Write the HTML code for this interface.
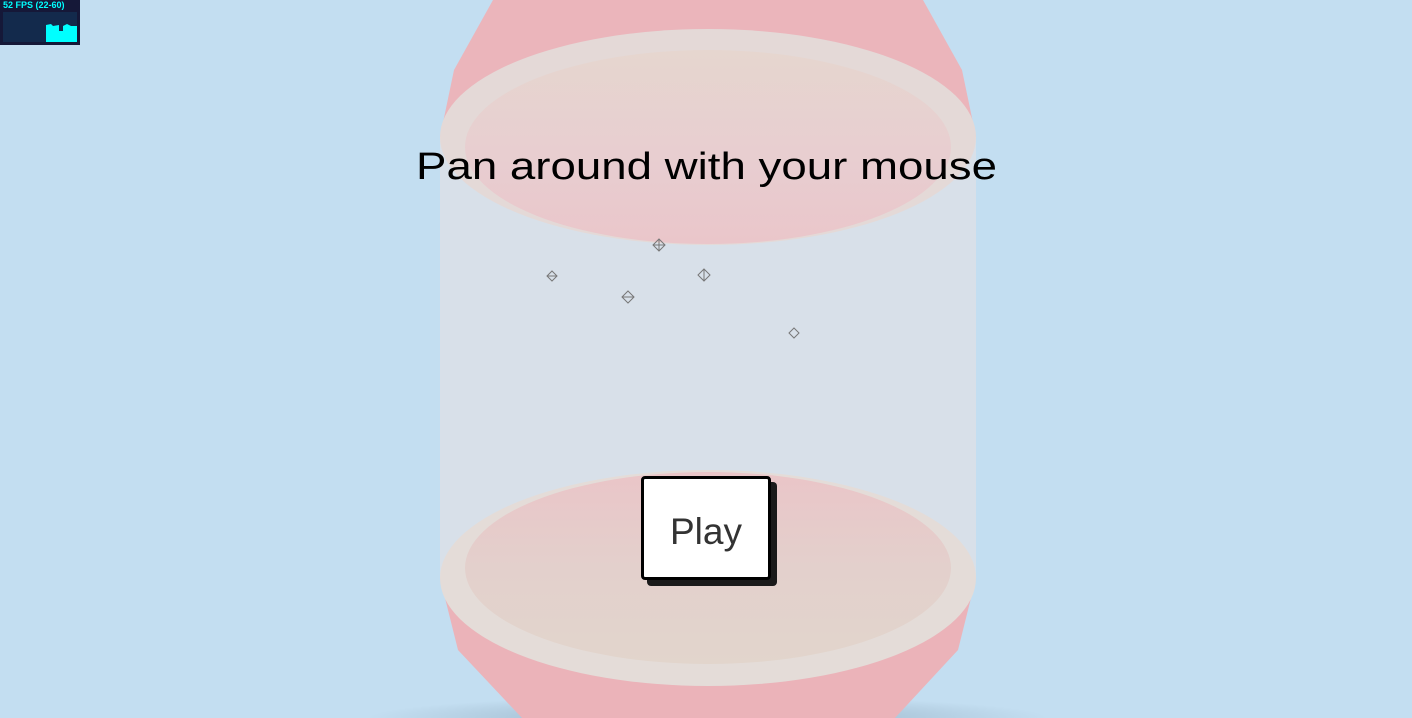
<!DOCTYPE html>
<html><head><style>
html,body{margin:0;padding:0;width:1412px;height:718px;overflow:hidden;background:#c3def1;font-family:"Liberation Sans",sans-serif}
svg{position:absolute;left:0;top:0}
#fps{position:absolute;left:0;top:0;width:80px;height:45px;background:#151838}
#fps .t{position:absolute;left:3px;top:0;font:bold 9px "Liberation Sans",sans-serif;color:#0ff;white-space:nowrap}
#fps .g{position:absolute;left:3px;top:12px;width:74px;height:30px;background:#132a4c}
#btn{position:absolute;left:641px;top:476px;width:124px;height:98px;background:#fff;border:3px solid #000;box-shadow:6px 6px 0 #1a1a1a;display:flex;align-items:center;justify-content:center;font-size:37px;color:#333;border-radius:4px;padding-top:8px;box-sizing:content-box;height:90px}
</style></head><body>
<svg width="1412" height="718">
<defs>
<radialGradient id="sh" cx="50%" cy="50%" r="50%"><stop offset="0" stop-color="#8aa4b8" stop-opacity=".8"/><stop offset="1" stop-color="#8aa4b8" stop-opacity="0"/></radialGradient>
<linearGradient id="bi" x1="0" y1="0" x2="0" y2="1"><stop offset="0" stop-color="#eac5c8"/><stop offset=".5" stop-color="#e3d0cc"/><stop offset="1" stop-color="#e2d5cc"/></linearGradient>
<linearGradient id="ti" x1="0" y1="0" x2="0" y2="1"><stop offset="0" stop-color="#e6d6cf"/><stop offset=".6" stop-color="#e8cdd0"/><stop offset="1" stop-color="#eac6ca"/></linearGradient>
</defs>
<ellipse cx="708" cy="718" rx="340" ry="22" fill="url(#sh)"/>
<path d="M493 0 L923 0 L962 70 L976 137 L440 137 L454 70 Z" fill="#ebb5bb"/>
<path d="M440 578 L976 578 L958 650 L895 718 L522 718 L458 650 Z" fill="#ebb3b9"/>
<rect x="440" y="137" width="536" height="441" fill="#d8e0e9"/>
<ellipse cx="708" cy="137" rx="268" ry="108" fill="#e4d9d7"/>
<ellipse cx="708" cy="147" rx="243" ry="97" fill="url(#ti)"/>
<path d="M440 137 A268 108 0 0 0 976 137 L976 160 L440 160Z" fill="#d8e0e9" opacity="0"/>
<ellipse cx="708" cy="578" rx="268" ry="108" fill="#e4dcd8"/>
<ellipse cx="708" cy="568" rx="243" ry="96" fill="url(#bi)"/>
<g fill="none" stroke="#777" stroke-width="1">
<path d="M659 239 l6 6 l-6 6 l-6 -6 z M653 245 l12 0 M659 239 l0 12"/>
<path d="M552 271 l5 5 l-5 5 l-5 -5 z M547 276 l10 0"/>
<path d="M628 291 l6 6 l-6 6 l-6 -6 z M622 297 l12 0"/>
<path d="M704 269 l6 6 l-6 6 l-6 -6 z M704 269 l0 12"/>
<path d="M794 328 l5 5 l-5 5 l-5 -5 z"/>
</g>
<text x="416" y="179" textLength="581" lengthAdjust="spacingAndGlyphs" font-family="Liberation Sans,sans-serif" font-size="38" fill="#000">Pan around with your mouse</text>
</svg>
<div id="fps"><div class="t">52 FPS (22-60)</div><div class="g"><svg width="74" height="30" style="position:relative"><path d="M43 30 L43 13 L48 12 L50 14 L56 13 L56 19 L60 19 L60 14 L64 12 L68 14 L74 14 L74 30Z" fill="#0ff"/></svg></div></div>
<div id="btn">Play</div>
</body></html>
